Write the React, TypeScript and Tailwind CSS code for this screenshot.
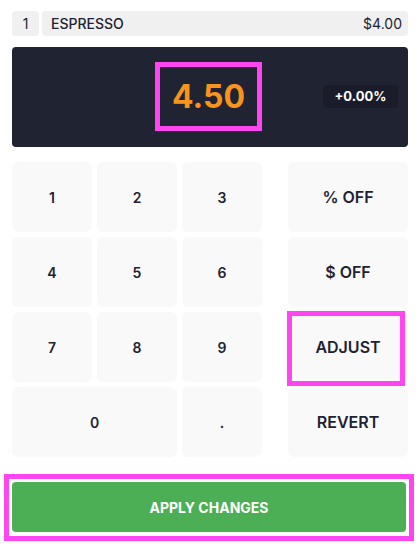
const keys = ["1", "2", "3", "4", "5", "6", "7", "8", "9"];

function Key({ label, className = "" }: { label: string; className?: string }) {
  return (
    <button
      className={`flex h-[70px] items-center justify-center rounded-md bg-[#f9f9fa] text-[14px] font-semibold text-[#1e2231] ${className}`}
    >
      {label}
    </button>
  );
}

function ActionKey({ label, highlight }: { label: string; highlight?: boolean }) {
  return (
    <button className="relative flex h-[70px] w-full items-center justify-center rounded-md bg-[#f9f9fa] text-[16px] font-semibold text-[#1e2231]">
      {label}
      {highlight && (
        <span className="pointer-events-none absolute -left-px -top-px h-[75px] w-[118px] border-[5px] border-[#ff44f2]" />
      )}
    </button>
  );
}

export default function App() {
  return (
    <div
      className="h-[553px] w-[420px] bg-white"
      style={{ fontFamily: "Inter, 'Noto Sans', sans-serif" }}
    >
      <div className="px-3 pt-[11px]">
        {/* Line item */}
        <div className="flex h-[25px] gap-[3px] text-[14px] text-[#1e2231]">
          <div className="flex w-[27px] items-center justify-center rounded bg-[#f0f0f0]">1</div>
          <div className="flex flex-1 items-center justify-between rounded bg-[#f0f0f0] pl-[9px] pr-[6px]">
            <span className="font-medium">ESPRESSO</span>
            <span>$4.00</span>
          </div>
        </div>

        {/* Display */}
        <div className="relative mt-[11px] flex h-[100px] items-center justify-center rounded bg-[#1f2332]">
          <div className="mb-px mr-[3px] flex h-[69px] w-[107px] items-center justify-center border-[5px] border-[#ff44f2]">
            <span className="text-[32px] font-bold text-[#f7941d]">4.50</span>
          </div>
          <span className="absolute right-[10px] top-[38px] flex h-[23px] w-[75px] items-center justify-center rounded bg-[#1a1d29] text-[13px] font-bold text-white">
            +0.00%
          </span>
        </div>

        {/* Keypad */}
        <div className="mt-[15px] flex">
          <div className="grid w-[250px] grid-cols-3 gap-[5px]">
            {keys.map((k) => (
              <Key key={k} label={k} />
            ))}
            <Key label="0" className="col-span-2" />
            <Key label="." />
          </div>
          <div className="ml-auto flex w-[120px] flex-col gap-[5px]">
            <ActionKey label="% OFF" />
            <ActionKey label="$ OFF" />
            <ActionKey label="ADJUST" highlight />
            <ActionKey label="REVERT" />
          </div>
        </div>
      </div>

      {/* Apply */}
      <div className="ml-[4px] mt-[17px] w-[410px] border-[5px] border-[#ff44f2] px-[3px] pb-[4px] pt-[3px]">
        <button className="flex h-[50px] w-full items-center justify-center rounded bg-[#4caf55] text-[14px] font-bold text-white">
          APPLY CHANGES
        </button>
      </div>
    </div>
  );
}
